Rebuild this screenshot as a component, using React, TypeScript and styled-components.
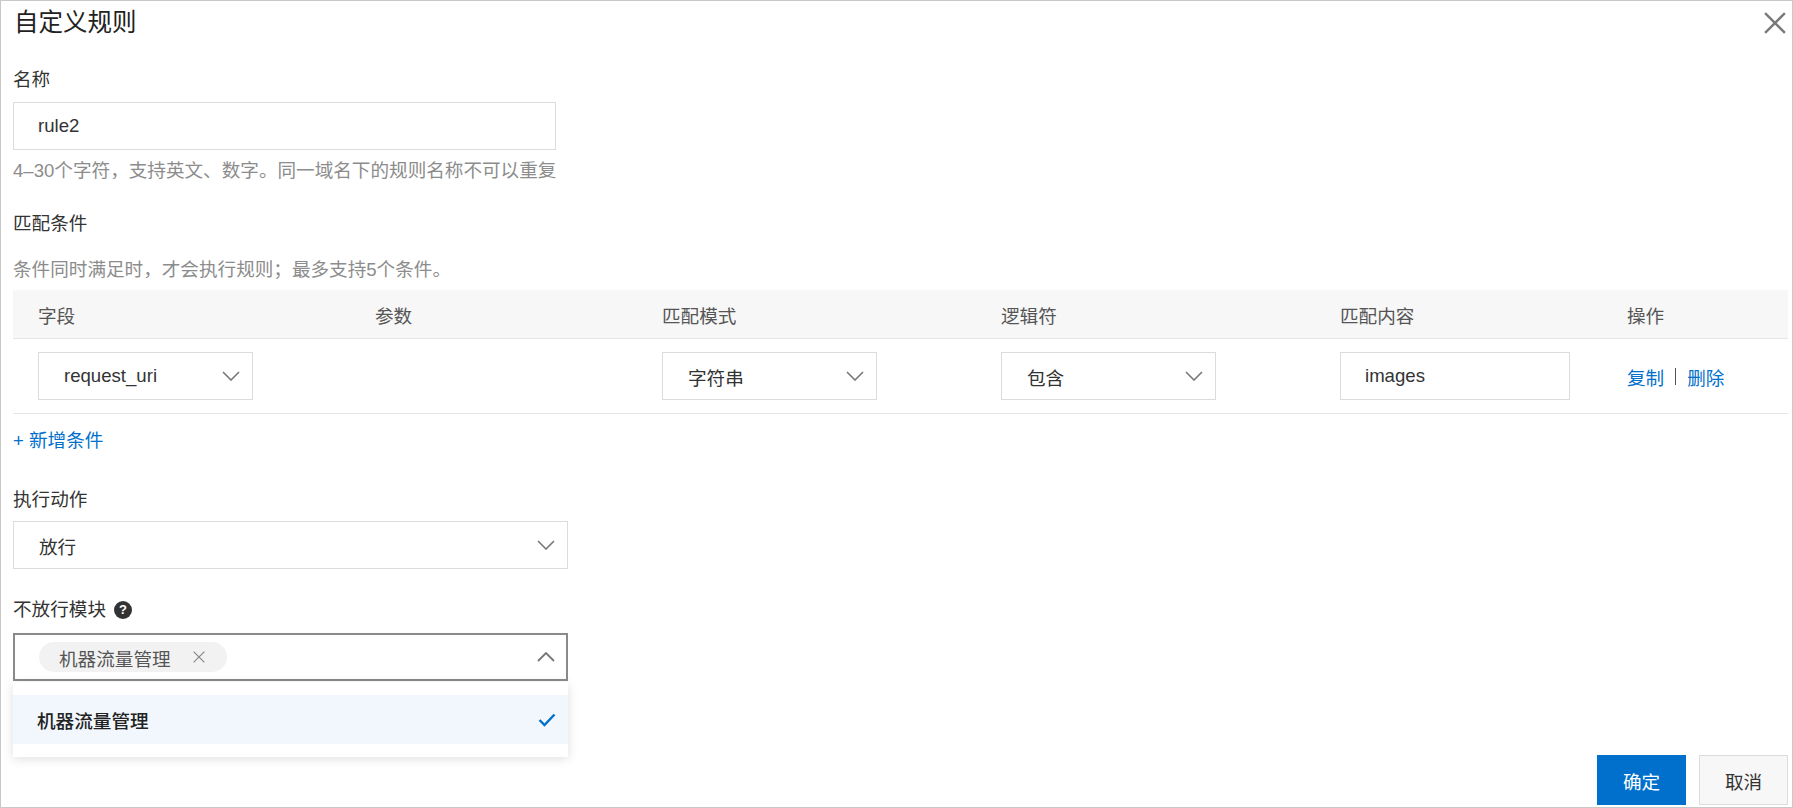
import React from "react";
import styled, { createGlobalStyle } from "styled-components";

const GlobalStyle = createGlobalStyle`
  * {
    box-sizing: border-box;
  }
  body {
    margin: 0;
    background: #fff;
    font-family: "Liberation Sans", "Noto Sans CJK SC", sans-serif;
    color: #333;
  }
`;

const BLUE = "#0070cc";
const FS = "18.6px";

const Dialog = styled.div`
  width: 1793px;
  height: 808px;
  border: 1px solid #c8c8c8;
  display: flex;
  flex-direction: column;
  background: #fff;
`;

const Header = styled.div`
  height: 44px;
  display: flex;
  align-items: center;
  justify-content: space-between;
  padding: 0 5px 0 13px;
`;

const Title = styled.h1`
  margin: 0;
  font-size: 24.5px;
  font-weight: 400;
  color: #222;
  line-height: 1;
`;

const CloseButton = styled.button`
  width: 24px;
  height: 24px;
  padding: 0;
  border: none;
  background: none;
  display: flex;
  align-items: center;
  justify-content: center;
  cursor: pointer;
`;

const Body = styled.div`
  padding: 0 4px 0 12px;
  display: flex;
  flex-direction: column;
  align-items: flex-start;
`;

const Label = styled.div<{ $mt: number; $mb: number }>`
  margin-top: ${(p) => p.$mt}px;
  margin-bottom: ${(p) => p.$mb}px;
  height: 24px;
  line-height: 24px;
  font-size: ${FS};
  color: #333;
  display: flex;
  align-items: center;
  gap: 8px;
`;

const Hint = styled.div<{ $mt: number }>`
  margin-top: ${(p) => p.$mt}px;
  height: 24px;
  line-height: 24px;
  font-size: ${FS};
  color: #8c8c8c;
`;

const TextInput = styled.input<{ $width: number }>`
  width: ${(p) => p.$width}px;
  height: 48px;
  border: 1px solid #dcdcdc;
  padding: 0 24px;
  font-family: inherit;
  font-size: ${FS};
  color: #333;
  background: #fff;
  outline: none;
`;

const SelectBox = styled.div<{ $width: number }>`
  width: ${(p) => p.$width}px;
  height: 48px;
  border: 1px solid #dcdcdc;
  padding: 0 12px 0 25px;
  display: flex;
  align-items: center;
  justify-content: space-between;
  font-size: ${FS};
  color: #333;
  background: #fff;
`;

const Table = styled.div`
  margin-top: 8px;
  width: 100%;
`;

const TableRow = styled.div<{ $head?: boolean }>`
  display: grid;
  grid-template-columns: 337px 287px 339px 339px 287px 1fr;
  align-items: center;
  height: ${(p) => (p.$head ? 49 : 75)}px;
  background: ${(p) => (p.$head ? "#f7f7f7" : "#fff")};
  border-bottom: 1px solid #e6e6e6;
`;

const HeadCell = styled.div`
  padding-left: 25px;
  font-size: ${FS};
  color: #555;
`;

const Cell = styled.div`
  padding-left: 25px;
  display: flex;
  align-items: center;
`;

const ActionLink = styled.a`
  font-size: ${FS};
  color: ${BLUE};
  text-decoration: none;
  cursor: pointer;
`;

const Divider = styled.span`
  width: 1px;
  height: 17px;
  background: #555;
  margin: 0 11px;
`;

const AddLink = styled.a`
  margin-top: 15px;
  height: 24px;
  line-height: 24px;
  font-size: ${FS};
  color: ${BLUE};
  text-decoration: none;
  cursor: pointer;
`;

const HelpIcon = styled.span`
  width: 18px;
  height: 18px;
  border-radius: 50%;
  background: #333;
  color: #fff;
  font-size: 13px;
  font-weight: 700;
  line-height: 18px;
  text-align: center;
`;

const MultiWrap = styled.div`
  position: relative;
  width: 555px;
`;

const MultiBox = styled.div`
  height: 48px;
  border: 2px solid #8a8a8a;
  padding: 0 11px 0 24px;
  display: flex;
  align-items: center;
  justify-content: space-between;
  background: #fff;
`;

const Tag = styled.span`
  height: 30px;
  border-radius: 15px;
  background: #f2f2f2;
  padding: 0 22px 0 20px;
  display: inline-flex;
  align-items: center;
  gap: 22px;
  font-size: ${FS};
  color: #555;
`;

const Dropdown = styled.div`
  position: absolute;
  top: calc(100% + 1px);
  left: 0;
  width: 100%;
  padding: 13px 0;
  background: #fff;
  box-shadow: 0 2px 10px rgba(0, 0, 0, 0.13);
  z-index: 2;
`;

const Option = styled.div<{ $selected?: boolean }>`
  height: 49px;
  padding: 0 12px 0 24px;
  display: flex;
  align-items: center;
  justify-content: space-between;
  font-size: ${FS};
  font-weight: 500;
  color: #222;
  background: ${(p) => (p.$selected ? "#f1f7fd" : "#fff")};
`;

const Footer = styled.div`
  margin-top: auto;
  padding: 0 4px 2px 0;
  display: flex;
  justify-content: flex-end;
  gap: 13px;
`;

const Button = styled.button<{ $primary?: boolean }>`
  width: 89px;
  height: 50px;
  font-family: inherit;
  font-size: ${FS};
  border: 1px solid ${(p) => (p.$primary ? BLUE : "#dcdcdc")};
  background: ${(p) => (p.$primary ? BLUE : "#f7f7f7")};
  color: ${(p) => (p.$primary ? "#fff" : "#333")};
  cursor: pointer;
`;

const ChevronDown = () => (
  <svg width="18" height="10" viewBox="0 0 18 10" fill="none">
    <polyline points="1,1 9,9 17,1" stroke="#777" strokeWidth="1.6" />
  </svg>
);

const ChevronUp = () => (
  <svg width="18" height="10" viewBox="0 0 18 10" fill="none">
    <polyline points="1,9 9,1 17,9" stroke="#777" strokeWidth="1.8" />
  </svg>
);

const CrossIcon = ({ size, color, width }: { size: number; color: string; width: number }) => (
  <svg width={size} height={size} viewBox="0 0 20 20" fill="none">
    <line x1="1" y1="1" x2="19" y2="19" stroke={color} strokeWidth={width} />
    <line x1="19" y1="1" x2="1" y2="19" stroke={color} strokeWidth={width} />
  </svg>
);

const CheckIcon = () => (
  <svg width="18" height="14" viewBox="0 0 18 14" fill="none">
    <polyline points="1.5,7 6.5,12 16.5,1.5" stroke={BLUE} strokeWidth="2.4" />
  </svg>
);

const columns = ["字段", "参数", "匹配模式", "逻辑符", "匹配内容", "操作"];

const App = () => {
  return (
    <>
      <GlobalStyle />
      <Dialog>
        <Header>
          <Title>自定义规则</Title>
          <CloseButton>
            <CrossIcon size={22} color="#7a7a7a" width={2.2} />
          </CloseButton>
        </Header>

        <Body>
          <Label $mt={23} $mb={10}>名称</Label>
          <TextInput $width={543} defaultValue="rule2" readOnly />
          <Hint $mt={9}>4–30个字符，支持英文、数字。同一域名下的规则名称不可以重复</Hint>

          <Label $mt={29} $mb={0}>匹配条件</Label>
          <Hint $mt={22}>条件同时满足时，才会执行规则；最多支持5个条件。</Hint>

          <Table>
            <TableRow $head>
              {columns.map((c) => (
                <HeadCell key={c}>{c}</HeadCell>
              ))}
            </TableRow>
            <TableRow>
              <Cell>
                <SelectBox $width={215}>
                  request_uri
                  <ChevronDown />
                </SelectBox>
              </Cell>
              <Cell />
              <Cell>
                <SelectBox $width={215}>
                  字符串
                  <ChevronDown />
                </SelectBox>
              </Cell>
              <Cell>
                <SelectBox $width={215}>
                  包含
                  <ChevronDown />
                </SelectBox>
              </Cell>
              <Cell>
                <TextInput $width={230} defaultValue="images" readOnly />
              </Cell>
              <Cell>
                <ActionLink>复制</ActionLink>
                <Divider />
                <ActionLink>删除</ActionLink>
              </Cell>
            </TableRow>
          </Table>

          <AddLink>+ 新增条件</AddLink>

          <Label $mt={35} $mb={9}>执行动作</Label>
          <SelectBox $width={555}>
            放行
            <ChevronDown />
          </SelectBox>

          <Label $mt={29} $mb={11}>
            不放行模块
            <HelpIcon>?</HelpIcon>
          </Label>
          <MultiWrap>
            <MultiBox>
              <Tag>
                机器流量管理
                <CrossIcon size={12} color="#888" width={2} />
              </Tag>
              <ChevronUp />
            </MultiBox>
            <Dropdown>
              <Option $selected>
                机器流量管理
                <CheckIcon />
              </Option>
            </Dropdown>
          </MultiWrap>
        </Body>

        <Footer>
          <Button $primary>确定</Button>
          <Button>取消</Button>
        </Footer>
      </Dialog>
    </>
  );
};

export default App;
